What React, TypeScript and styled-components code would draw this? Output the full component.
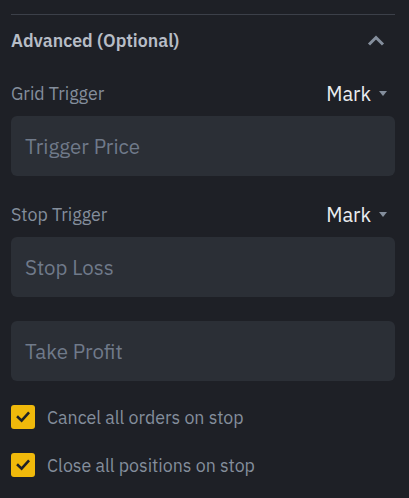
import React from 'react';
import styled, { createGlobalStyle } from 'styled-components';

const GlobalStyle = createGlobalStyle`
    html, body {
        margin: 0;
        padding: 0;
        background: #1e2026;
    }
    body {
        font-family: 'IBM Plex Sans', 'Noto Sans', Roboto, sans-serif;
        -webkit-font-smoothing: antialiased;
    }
`;

const Wrapper = styled.div`
    width: 409px;
    height: 498px;
    box-sizing: border-box;
    padding: 14px 14px 0 11px;
    background: #1e2026;
`;

const Divider = styled.div`
    height: 1px;
    background: #3c4049;
`;

const Header = styled.div`
    height: 50px;
    display: flex;
    align-items: center;
    justify-content: space-between;
`;

const HeaderTitle = styled.span`
    font-size: 17.8px;
    font-weight: 600;
    color: #b7bdc6;
`;

const Chevron = styled.svg`
    width: 18px;
    height: 11px;
    margin-right: 10px;
`;

const LabelRow = styled.div<{ $top: number }>`
    height: 46px;
    margin-top: ${p => p.$top}px;
    display: flex;
    align-items: center;
    justify-content: space-between;
`;

const Label = styled.span`
    font-size: 17.8px;
    color: #848e9c;
`;

const Select = styled.div`
    display: flex;
    align-items: center;
    gap: 8px;
    margin-right: 8px;
    font-size: 20px;
    color: #eaecef;
`;

const Caret = styled.span`
    width: 0;
    height: 0;
    border-left: 4px solid transparent;
    border-right: 4px solid transparent;
    border-top: 5px solid #848e9c;
`;

const Field = styled.div<{ $top?: number }>`
    height: 60px;
    margin-top: ${p => p.$top ?? 0}px;
    padding: 0 14px;
    display: flex;
    align-items: center;
    border-radius: 6px;
    background: #2b2f36;
    font-size: 20.5px;
    color: #707a8a;
`;

const Checks = styled.div`
    margin-top: 12px;
`;

const CheckRow = styled.label`
    height: 48px;
    display: flex;
    align-items: center;
    gap: 12px;
    font-size: 17.8px;
    color: #848e9c;
`;

const Box = styled.span`
    width: 24px;
    height: 24px;
    border-radius: 3px;
    background: #f0b90b;
    display: flex;
    align-items: center;
    justify-content: center;
`;

const Check = () => (
    <Box>
        <svg width="14" height="12" viewBox="0 0 14 12">
            <path d="M2 6.2 L5.6 9.6 L12.2 2.4" fill="none" stroke="#1e2026" strokeWidth="2.6" strokeLinecap="square" />
        </svg>
    </Box>
);

const App = () => (
    <Wrapper>
        <GlobalStyle />
        <Divider />
        <Header>
            <HeaderTitle>Advanced (Optional)</HeaderTitle>
            <Chevron viewBox="0 0 18 11">
                <path d="M2 9.5 L9 2.5 L16 9.5" fill="none" stroke="#848e9c" strokeWidth="3" />
            </Chevron>
        </Header>
        <LabelRow $top={5}>
            <Label>Grid Trigger</Label>
            <Select>
                Mark
                <Caret />
            </Select>
        </LabelRow>
        <Field>Trigger Price</Field>
        <LabelRow $top={15}>
            <Label>Stop Trigger</Label>
            <Select>
                Mark
                <Caret />
            </Select>
        </LabelRow>
        <Field>Stop Loss</Field>
        <Field $top={24}>Take Profit</Field>
        <Checks>
            <CheckRow>
                <Check />
                Cancel all orders on stop
            </CheckRow>
            <CheckRow>
                <Check />
                Close all positions on stop
            </CheckRow>
        </Checks>
    </Wrapper>
);

export default App;
